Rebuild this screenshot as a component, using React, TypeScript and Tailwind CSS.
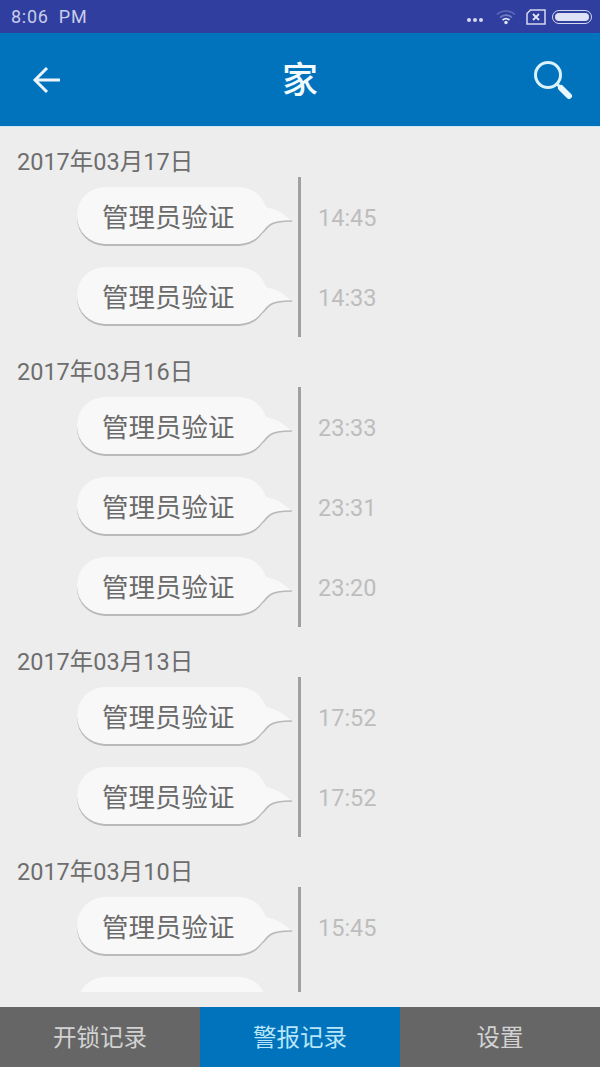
const SECTIONS = [
  { date: '2017年03月17日', times: ['14:45', '14:33'] },
  { date: '2017年03月16日', times: ['23:33', '23:31', '23:20'] },
  { date: '2017年03月13日', times: ['17:52', '17:52'] },
  { date: '2017年03月10日', times: ['15:45', ''] },
];

const TABS = [
  { label: '开锁记录', active: false },
  { label: '警报记录', active: true },
  { label: '设置', active: false },
];

const FONT = 'font-["Roboto","Noto_Sans_CJK_SC",sans-serif]';

function StatusIcons() {
  return (
    <div className="flex items-center">
      <div className="flex gap-[2px] mt-[6px] mr-[13px]">
        <span className="w-[4px] h-[4px] rounded-full bg-[#d5d9f0]" />
        <span className="w-[4px] h-[4px] rounded-full bg-[#d5d9f0]" />
        <span className="w-[4px] h-[4px] rounded-full bg-[#d5d9f0]" />
      </div>
      <svg width="20" height="16" viewBox="0 0 20 16" fill="none" className="mr-[10px]">
        <path d="M1 5.5C6 0.8 14 0.8 19 5.5" stroke="#5f6cb8" strokeWidth="1.6" />
        <path d="M4 8.5C7.5 5.3 12.5 5.3 16 8.5" stroke="#7480c2" strokeWidth="1.6" />
        <path d="M6.5 11C8.5 9.4 11.5 9.4 13.5 11" stroke="#e3e6f6" strokeWidth="1.8" />
        <circle cx="10" cy="13.5" r="1.7" fill="#e3e6f6" />
      </svg>
      <svg width="20" height="16" viewBox="0 0 20 16" fill="none" className="mr-[6px]">
        <path d="M4.5 1H19V15H1V4.5Z" stroke="#d5d9f0" strokeWidth="1.5" />
        <path d="M7 5L13 11M13 5L7 11" stroke="#e3e6f6" strokeWidth="1.8" />
      </svg>
      <div className="w-[40px] h-[14px] rounded-full border border-[#d5d9f0] p-[2px]">
        <div className="w-full h-full rounded-full bg-[#dfe2f4]" />
      </div>
    </div>
  );
}

function Bubble({ label }: { label: string }) {
  return (
    <div className="relative w-[190px] h-[57px] rounded-[28px] bg-[#f8f8f8] shadow-[0_2px_0_#b9b9b9] pl-[25px] pt-[5px] flex items-center">
      <span className="text-[26.5px] leading-none text-[#6a6a6a]">{label}</span>
      <svg width="40" height="40" viewBox="0 0 40 40" fill="none" className="absolute left-[178px] top-[10px]">
        <path d="M6 4C10 10 13 11 18 12C25 14 31 19 37 24C28 24 19 25 15 28C12 30 10 33 8 35L2 30Z" fill="#f8f8f8" />
        <path d="M37 24C28 24 19 25 15 28C12 30 10 33 8 35.5" stroke="#b9b9b9" strokeWidth="1.6" />
      </svg>
    </div>
  );
}

export default function App() {
  return (
    <div className={`${FONT} w-[600px] h-[1067px] flex flex-col bg-[#ededed] overflow-hidden`}>
      <div className="h-[33px] shrink-0 bg-[#303f9f] flex items-center justify-between pl-[11px] pr-[8px]">
        <span className="text-[18px] text-[#c9cdea] tracking-[0.7px]">8:06&nbsp; PM</span>
        <StatusIcons />
      </div>

      <header className="h-[94px] shrink-0 bg-[#0073bc] grid grid-cols-[1fr_auto_1fr] items-center pl-[32px] pr-[27px] border-b border-[#cfe6f3]">
        <svg width="30" height="30" viewBox="0 0 30 30" fill="none">
          <path d="M28 15H4M15 3L3 15L15 27" stroke="#eaf6fc" strokeWidth="3" />
        </svg>
        <h1 className="text-[36px] font-medium text-[#f2fbff] pt-[3px] ml-[-5px]">家</h1>
        <svg width="40" height="40" viewBox="0 0 40 40" fill="none" className="justify-self-end">
          <circle cx="15" cy="15" r="12.5" stroke="#d9f2fb" strokeWidth="3" />
          <path d="M24 24L28 28" stroke="#d9f2fb" strokeWidth="3" />
          <path d="M28 28L36 36" stroke="#eaf8fd" strokeWidth="6" strokeLinecap="round" />
        </svg>
      </header>

      <main className="flex-1 min-h-0 pb-[15px]">
        <div className="h-full overflow-hidden pt-[14px] flex flex-col gap-[14px]">
          {SECTIONS.map((section) => (
            <section key={section.date} className="shrink-0">
              <div className="h-[36px] pl-[17px] text-[23.5px] leading-[42px] text-[#6d6d6d]">{section.date}</div>
              {section.times.map((time, i) => (
                <div key={i} className="h-20 flex items-center">
                  <div className="w-[301px] h-full shrink-0 border-r-[3px] border-[#a0a0a0] pl-[77px] pt-[10px]">
                    <Bubble label={time ? '管理员验证' : ''} />
                  </div>
                  <span className="pl-[17px] pt-[3px] text-[23.5px] text-[#bdbdbd]">{time}</span>
                </div>
              ))}
            </section>
          ))}
        </div>
      </main>

      <nav className="h-[60px] shrink-0 grid grid-cols-3 bg-[#666666]">
        {TABS.map((tab) => (
          <div
            key={tab.label}
            className={
              tab.active
                ? 'flex items-center justify-center pt-[3px] text-[23.5px] bg-[#0073bc] text-[#b9e6f8]'
                : 'flex items-center justify-center pt-[3px] text-[23.5px] text-[#d2d2d2]'
            }
          >
            {tab.label}
          </div>
        ))}
      </nav>
    </div>
  );
}
